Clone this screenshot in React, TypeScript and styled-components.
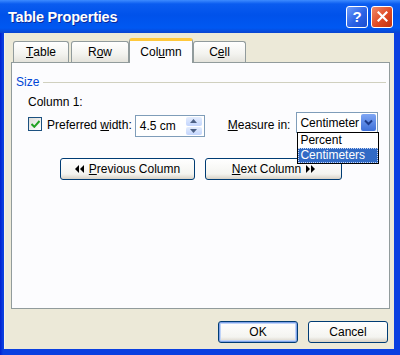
import React from 'react';
import styled, { createGlobalStyle, css } from 'styled-components';

const Global = createGlobalStyle`
  html, body { margin: 0; padding: 0; }
  body {
    width: 400px; height: 355px; overflow: hidden;
    font-family: "Liberation Sans", Arial, sans-serif;
    font-size: 12px; color: #000;
  }
`;

const Window = styled.div`
  width: 400px; height: 355px;
  display: flex; flex-direction: column;
  background: #0A3FE0;
`;

const TitleBar = styled.div`
  height: 33px; flex: none;
  display: flex; align-items: center; gap: 3px;
  padding: 0 7px 0 8px;
  background: linear-gradient(to bottom, #3D8BFF 0%, #0A5CF0 12%, #0052EA 45%, #0058F2 85%, #0A44D0 100%);
`;

const Title = styled.div`
  flex: 1;
  color: #fff;
  font-weight: bold;
  font-size: 14.5px;
  letter-spacing: -0.2px;
  text-shadow: 1px 1px 0 #0B2A98;
`;

const CaptionButton = styled.div<{ $kind: 'help' | 'close' }>`
  width: 22px; height: 22px; box-sizing: border-box;
  border: 1px solid #fff; border-radius: 3px;
  display: flex; align-items: center; justify-content: center;
  color: #fff; font-weight: bold; font-size: 15px;
  ${p => p.$kind === 'help'
    ? css`background: linear-gradient(135deg, #6E9DFB 0%, #2A62E6 55%, #1B4ED0 100%);`
    : css`background: linear-gradient(135deg, #F08A6A 0%, #E04A24 55%, #C2330F 100%);`}
`;

const Frame = styled.div`
  flex: 1;
  display: flex; flex-direction: column;
  padding: 0 6px 6px 4px;
  background: linear-gradient(to right, #0020D0, #0A3FE0 3px);
`;

const Body = styled.div`
  flex: 1;
  display: flex; flex-direction: column;
  padding: 5px 4px 0 6px;
  background: #ECE9D8;
  border-left: 1px solid #F4F2E8;
`;

const TabRow = styled.div`
  display: flex; align-items: flex-end;
  height: 25px; padding-left: 2px;
  position: relative; z-index: 1;
`;

const Tab = styled.div<{ $w: number; $active?: boolean; $ml?: number }>`
  width: ${p => p.$w}px;
  margin-left: ${p => p.$ml ?? 0}px;
  box-sizing: border-box;
  display: flex; align-items: center; justify-content: center;
  border: 1px solid #919B9C; border-bottom: none;
  border-radius: 3px 3px 0 0;
  ${p => p.$active
    ? css`
        height: 25px;
        background: #FCFCFE;
        border-top: 3px solid #FFC83C;
        box-shadow: inset 0 -1px 0 #FCFCFE;
        padding-bottom: 1px;
      `
    : css`
        height: 21px;
        margin-bottom: 1px;
        background: linear-gradient(to bottom, #FFFFFF, #F3F3EF 60%, #E4E3DC);
      `}
`;

const Panel = styled.div`
  margin-top: -1px;
  height: 247px; box-sizing: border-box;
  border: 1px solid #919B9C;
  background: #FCFCFE;
  padding: 11px 3px 0 4px;
  display: flex; flex-direction: column;
`;

const Legend = styled.div`
  height: 16px;
  display: flex; align-items: center; gap: 4px;
  color: #0046D5;
  &::after {
    content: '';
    flex: 1; height: 1px;
    background: #D0D0BF;
  }
`;

const Group = styled.div`
  margin-left: 12px;
  display: flex; flex-direction: column;
`;

const PlainLabel = styled.div`
  margin-top: 5px;
  line-height: 14px;
`;

const FieldRow = styled.div`
  margin-top: 3px;
  height: 26px;
  display: flex; align-items: flex-start;
`;

const CheckBox = styled.div`
  margin-top: 5px;
  width: 14px; height: 14px; box-sizing: border-box;
  border: 1px solid #1C5180;
  background: linear-gradient(135deg, #DCDCD7, #FFFFFF);
  display: flex; align-items: center; justify-content: center;
`;

const FieldLabel = styled.div<{ $gapL: number; $gapR: number }>`
  margin: 6px ${p => p.$gapR}px 0 ${p => p.$gapL}px;
  line-height: 14px;
  white-space: nowrap;
`;

const TextBox = styled.div`
  margin-top: 3px;
  width: 70px; height: 22px; box-sizing: border-box;
  border: 1px solid #7F9DB9;
  background: #fff;
  display: flex; align-items: center;
  padding: 0 2px 0 4px;
`;

const Spinner = styled.div`
  margin-left: auto;
  width: 16px; height: 18px;
  display: flex; flex-direction: column; gap: 1px;
`;

const SpinHalf = styled.div`
  flex: 1;
  border-radius: 2px;
  background: linear-gradient(to bottom, #E4EDFD, #C3D5FD);
  display: flex; align-items: center; justify-content: center;
`;

const Combo = styled.div`
  position: relative;
  width: 82px; height: 21px; box-sizing: border-box;
  border: 1px solid #7F9DB9;
  background: #fff;
  display: flex; align-items: center;
  padding: 0 1px 0 3px;
`;

const ComboText = styled.div`
  flex: 1; overflow: hidden; white-space: nowrap;
`;

const ComboButton = styled.div`
  width: 15px; height: 17px;
  border-radius: 2px;
  background: linear-gradient(to bottom, #7FA6F4, #3C6FD8);
  display: flex; align-items: center; justify-content: center;
`;

const DropList = styled.div`
  position: absolute;
  top: 100%; left: 0;
  width: 82px; box-sizing: border-box;
  border: 1px solid #000;
  background: #fff;
  z-index: 2;
`;

const DropItem = styled.div<{ $selected?: boolean }>`
  height: 15px; line-height: 15px;
  padding-left: 2px;
  ${p => p.$selected && css`
    background: #316AC5;
    color: #fff;
    outline: 1px dotted #C8D8F4;
    outline-offset: -1px;
  `}
`;

const NavRow = styled.div`
  margin-top: 20px;
  display: flex; justify-content: center; gap: 10px;
`;

const XPButton = styled.div<{ $w: number; $default?: boolean }>`
  width: ${p => p.$w}px; height: 22px; box-sizing: border-box;
  border: 1px solid #003C74; border-radius: 3px;
  background: linear-gradient(to bottom, #FFFFFF, #F4F4F0 75%, #D8D2C6);
  display: flex; align-items: center; justify-content: center; gap: 4px;
  white-space: nowrap;
  ${p => p.$default && css`box-shadow: inset 0 0 0 1px #7FA2E8, inset 0 0 0 2px #C0D4F8;`}
`;

const Footer = styled.div`
  margin-top: 12px;
  padding-right: 2px;
  display: flex; justify-content: flex-end; gap: 10px;
`;

const U = styled.span`text-decoration: underline;`;

const Arrows = ({ dir }: { dir: 'left' | 'right' }) => (
  <svg width="10" height="8" viewBox="0 0 10 8">
    {dir === 'left'
      ? <path d="M4 0 L0 4 L4 8 Z M9 0 L5 4 L9 8 Z" fill="#000" />
      : <path d="M1 0 L5 4 L1 8 Z M6 0 L10 4 L6 8 Z" fill="#000" />}
  </svg>
);

export default function App() {
  return (
    <>
      <Global />
      <Window>
        <TitleBar>
          <Title>Table Properties</Title>
          <CaptionButton $kind="help">?</CaptionButton>
          <CaptionButton $kind="close">
            <svg width="11" height="11" viewBox="0 0 11 11">
              <path d="M1.5 1.5 L9.5 9.5 M9.5 1.5 L1.5 9.5" stroke="#fff" strokeWidth="2.2" strokeLinecap="square" />
            </svg>
          </CaptionButton>
        </TitleBar>
        <Frame>
          <Body>
            <TabRow>
              <Tab $w={56}><U>T</U>able</Tab>
              <Tab $w={58} $ml={2}>R<U>o</U>w</Tab>
              <Tab $w={64} $active>Col<U>u</U>mn</Tab>
              <Tab $w={53}>C<U>e</U>ll</Tab>
            </TabRow>
            <Panel>
              <Legend>Size</Legend>
              <Group>
                <PlainLabel>Column 1:</PlainLabel>
                <FieldRow>
                  <CheckBox>
                    <svg width="9" height="8" viewBox="0 0 9 8">
                      <path d="M0.5 4 L3.3 6.8 L8.5 1" stroke="#21A121" strokeWidth="2" fill="none" />
                    </svg>
                  </CheckBox>
                  <FieldLabel $gapL={5} $gapR={3}>Preferred <U>w</U>idth:</FieldLabel>
                  <TextBox>
                    4.5 cm
                    <Spinner>
                      <SpinHalf>
                        <svg width="7" height="4" viewBox="0 0 7 4"><path d="M0 4 L3.5 0 L7 4 Z" fill="#4D6185" /></svg>
                      </SpinHalf>
                      <SpinHalf>
                        <svg width="7" height="4" viewBox="0 0 7 4"><path d="M0 0 L3.5 4 L7 0 Z" fill="#4D6185" /></svg>
                      </SpinHalf>
                    </Spinner>
                  </TextBox>
                  <FieldLabel $gapL={23} $gapR={6}><U>M</U>easure in:</FieldLabel>
                  <Combo>
                    <ComboText>Centimeter</ComboText>
                    <ComboButton>
                      <svg width="9" height="7" viewBox="0 0 9 7">
                        <path d="M1 1.5 L4.5 5 L8 1.5" stroke="#1B3A8A" strokeWidth="2" fill="none" />
                      </svg>
                    </ComboButton>
                    <DropList>
                      <DropItem>Percent</DropItem>
                      <DropItem $selected>Centimeters</DropItem>
                    </DropList>
                  </Combo>
                </FieldRow>
              </Group>
              <NavRow>
                <XPButton $w={135}><Arrows dir="left" /><span><U>P</U>revious Column</span></XPButton>
                <XPButton $w={137}><span><U>N</U>ext Column</span><Arrows dir="right" /></XPButton>
              </NavRow>
            </Panel>
            <Footer>
              <XPButton $w={80} $default>OK</XPButton>
              <XPButton $w={80}>Cancel</XPButton>
            </Footer>
          </Body>
        </Frame>
      </Window>
    </>
  );
}
